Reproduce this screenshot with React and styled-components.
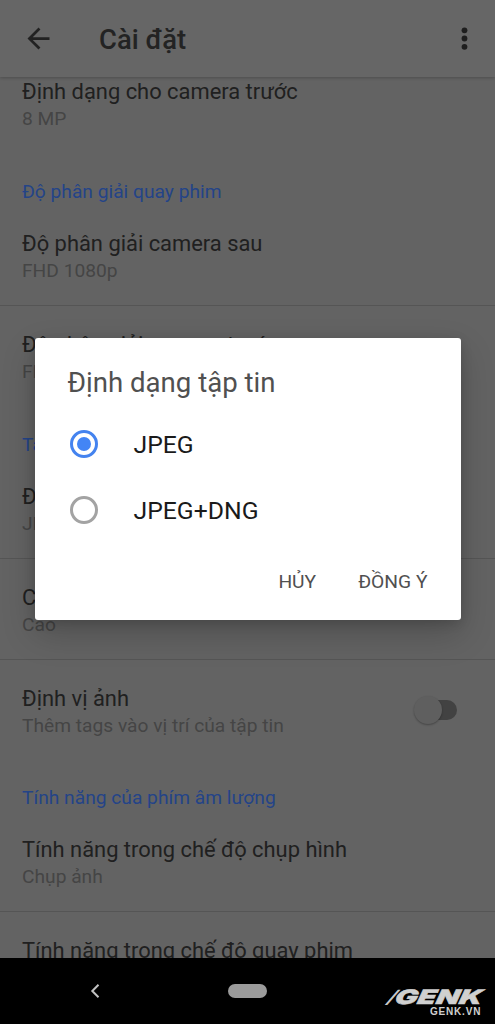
import React from 'react';
import styled, { createGlobalStyle } from 'styled-components';

const Global = createGlobalStyle`
  *, *::before, *::after { box-sizing: border-box; }
  body { margin: 0; background: #000; font-family: Roboto, "Noto Sans", sans-serif; }
`;

const Phone = styled.div`
  position: relative;
  display: flex;
  flex-direction: column;
  width: 495px;
  height: 1024px;
  overflow: hidden;
`;

/* Colours of the screen are the dimmed ones shown while the dialog is open. */
const Screen = styled.div`
  position: relative;
  display: flex;
  flex-direction: column;
  height: 958px;
  overflow: hidden;
  background: #636363;
`;

const AppBar = styled.header`
  position: relative;
  z-index: 1;
  flex: none;
  display: flex;
  align-items: center;
  height: 77px;
  padding: 0 20px 0 22px;
  background: #666;
  box-shadow: 0 1px 3px rgba(0, 0, 0, 0.22);
`;

const AppTitle = styled.h1`
  flex: 1;
  margin: 0 0 0 44px;
  padding-top: 3px;
  font-size: 27.4px;
  line-height: 36px;
  font-weight: 500;
  color: #232323;
`;

const List = styled.main`
  flex: 1;
  margin-top: -24px;
`;

const Category = styled.h2`
  height: 51px;
  margin: 0;
  padding: 26px 22px 0;
  font-size: 19.2px;
  line-height: 24px;
  font-weight: 400;
  color: #244488;
`;

const Row = styled.div`
  display: flex;
  justify-content: space-between;
  height: ${(p) => (p.$short ? 100 : 101)}px;
  padding: 26px 38px 0 22px;
  border-bottom: 1px solid ${(p) => (p.$divider ? '#555' : 'transparent')};
`;

const RowTitle = styled.div`
  font-size: 21.9px;
  line-height: 26px;
  color: #202020;
  white-space: nowrap;
`;

const RowValue = styled.div`
  padding-top: 1px;
  font-size: 19.2px;
  line-height: 26px;
  color: #454545;
  white-space: nowrap;
`;

const Track = styled.div`
  display: flex;
  align-items: center;
  width: 40px;
  height: 20px;
  margin-top: 14px;
  border-radius: 10px;
  background: #424242;
`;

const Thumb = styled.div`
  flex: none;
  width: 28px;
  height: 28px;
  margin-left: -3px;
  border-radius: 50%;
  background: #5f5f5f;
  box-shadow: 0 1px 2px rgba(0, 0, 0, 0.3);
`;

const DialogLayer = styled.div`
  position: absolute;
  z-index: 2;
  inset: 0;
  display: flex;
  align-items: center;
  justify-content: center;
`;

const Dialog = styled.section`
  display: flex;
  flex-direction: column;
  width: 426px;
  height: 282px;
  border-radius: 3px;
  background: #fff;
  box-shadow: 0 14px 34px rgba(0, 0, 0, 0.2), 0 3px 12px rgba(0, 0, 0, 0.14);
`;

const DialogTitle = styled.h2`
  margin: 0;
  padding: 29px 33px 12px;
  font-size: 27.6px;
  line-height: 32px;
  font-weight: 400;
  color: #505050;
`;

const Option = styled.div`
  display: flex;
  align-items: center;
  gap: 36px;
  height: 66px;
  padding-left: 35px;
  font-size: 24.75px;
  color: #1a1a1a;
`;

const Radio = styled.span`
  display: flex;
  align-items: center;
  justify-content: center;
  width: 28px;
  height: 28px;
  border: 3px solid ${(p) => (p.$on ? '#4483ef' : '#a3a3a3')};
  border-radius: 50%;

  &::before {
    content: '';
    width: 14px;
    height: 14px;
    border-radius: 50%;
    background: ${(p) => (p.$on ? '#4385f5' : 'transparent')};
  }
`;

const Actions = styled.div`
  display: flex;
  justify-content: flex-end;
  gap: 42px;
  padding: 27px 33px 0 0;
`;

const Action = styled.button`
  padding: 0;
  border: 0;
  background: none;
  font: 400 19.25px/24px Roboto, "Noto Sans", sans-serif;
  color: #505050;
`;

const NavBar = styled.nav`
  position: relative;
  display: flex;
  align-items: center;
  height: 66px;
  padding-left: 90px;
  background: #000;
`;

const HomePill = styled.div`
  width: 39px;
  height: 14px;
  margin-left: 128px;
  border-radius: 7px;
  background: #9b9b9b;
`;

const Brand = styled.div`
  position: absolute;
  right: 0;
  bottom: 0;
  width: 107px;
  height: 36px;
  color: #d0d0d0;
`;

const BrandName = styled.div`
  display: flex;
  align-items: center;
  height: 16px;
  margin-top: 1px;
  font: italic 900 20px/16px Inter, sans-serif;
  transform: scaleX(1.5) skewX(-8deg);
  transform-origin: 0 50%;
  white-space: nowrap;
  -webkit-text-stroke: 0.5px currentColor;
`;

const Slash = styled.span`
  margin-right: -1px;
  font-size: 17px;
  font-weight: 300;
`;

const BrandSite = styled.div`
  padding: 1px 0 0 42px;
  font: 700 10px/12px "Liberation Sans", sans-serif;
  letter-spacing: 0.8px;
`;

function Setting({ title, value, divider, short, children }) {
  return (
    <Row $divider={divider} $short={short}>
      <div>
        <RowTitle>{title}</RowTitle>
        <RowValue>{value}</RowValue>
      </div>
      {children}
    </Row>
  );
}

export default function App() {
  return (
    <Phone>
      <Global />
      <Screen>
        <AppBar>
          <svg width="33" height="33" viewBox="0 0 24 24" fill="#222">
            <path d="M20 11H7.8l5.6-5.6L12 4l-8 8 8 8 1.4-1.4L7.8 13H20z" />
          </svg>
          <AppTitle>Cài đặt</AppTitle>
          <svg width="22" height="33" viewBox="0 0 22 33" fill="#1e1e1e">
            <circle cx="11.5" cy="8.3" r="2.9" />
            <circle cx="11.5" cy="16.5" r="2.9" />
            <circle cx="11.5" cy="24.8" r="2.9" />
          </svg>
        </AppBar>
        <List>
          <Setting title="Định dạng cho camera trước" value="8 MP" />
          <Category>Độ phân giải quay phim</Category>
          <Setting title="Độ phân giải camera sau" value="FHD 1080p" divider />
          <Setting title="Độ phân giải camera trước" value="FHD 1080p" />
          <Category>Tập tin</Category>
          <Setting title="Định dạng tập tin" value="JPEG" divider />
          <Setting title="Chất lượng" value="Cao" divider />
          <Setting title="Định vị ảnh" value="Thêm tags vào vị trí của tập tin" short>
            <Track><Thumb /></Track>
          </Setting>
          <Category>Tính năng của phím âm lượng</Category>
          <Setting title="Tính năng trong chế độ chụp hình" value="Chụp ảnh" divider />
          <Setting title="Tính năng trong chế độ quay phim" />
        </List>
        <DialogLayer>
          <Dialog>
            <DialogTitle>Định dạng tập tin</DialogTitle>
            <Option><Radio $on />JPEG</Option>
            <Option><Radio />JPEG+DNG</Option>
            <Actions>
              <Action>HỦY</Action>
              <Action>ĐỒNG Ý</Action>
            </Actions>
          </Dialog>
        </DialogLayer>
      </Screen>
      <NavBar>
        <svg width="10" height="16" viewBox="0 0 10 16" fill="none" stroke="#c2c2c2" strokeWidth="2">
          <path d="M8.5 1.8 2.3 8l6.2 6.2" />
        </svg>
        <HomePill />
        <Brand>
          <BrandName><Slash>/</Slash>GENK</BrandName>
          <BrandSite>GENK.VN</BrandSite>
        </Brand>
      </NavBar>
    </Phone>
  );
}
